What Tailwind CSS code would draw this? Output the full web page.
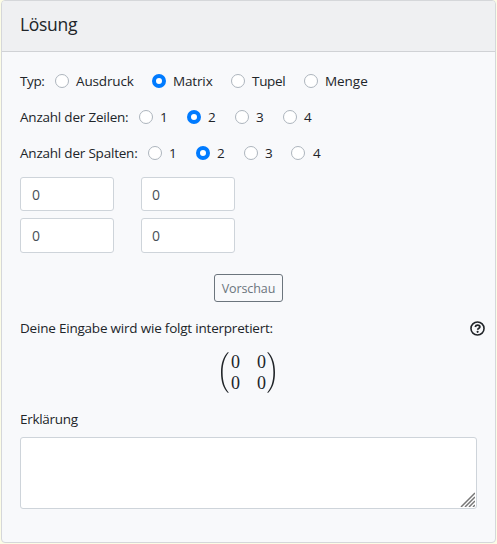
<!DOCTYPE html>
<html lang="de">
<head>
<meta charset="utf-8">
<title>Lösung</title>
<script src="https://cdn.jsdelivr.net/npm/@tailwindcss/browser@4"></script>
</head>
<body class="h-[544px] overflow-hidden bg-[#fcfce6] pl-px font-['Open_Sans','Noto_Sans',sans-serif] text-[13.5px] tracking-[-0.21px] text-[#212529]">
<section class="flex h-[543px] w-[495px] flex-col rounded-[4px] border border-[#d5d7da] bg-[#f8f9fb]">
  <h1 class="h-[51px] shrink-0 rounded-t-[3px] border-b border-[#d0d2d5] bg-[#eff0f2] pl-[18px] text-[17.5px] leading-[46px] tracking-[-0.3px]">Lösung</h1>
  <div class="flex flex-col px-[18px] pt-[11px]">
    <div class="flex h-9 items-center">
      <span class="w-[35px] tracking-[-0.4px]">Typ:</span>
      <label class="flex w-[97px] items-center gap-[7px] tracking-[-0.15px]"><i class="size-[14px] rounded-full border border-[#adb5bd] bg-white"></i>Ausdruck</label>
      <label class="flex w-[79px] items-center gap-[7px] tracking-[-0.15px]"><i class="size-[14px] rounded-full border-[4.5px] border-[#007bff] bg-white"></i>Matrix</label>
      <label class="flex w-[73px] items-center gap-[7px] tracking-[-0.3px]"><i class="size-[14px] rounded-full border border-[#adb5bd] bg-white"></i>Tupel</label>
      <label class="flex items-center gap-[7px] tracking-[-0.05px]"><i class="size-[14px] rounded-full border border-[#adb5bd] bg-white"></i>Menge</label>
    </div>
    <div class="flex h-9 items-center">
      <span class="w-[119px]">Anzahl der Zeilen:</span>
      <label class="flex w-12 items-center gap-[7px]"><i class="size-[14px] rounded-full border border-[#adb5bd] bg-white"></i>1</label>
      <label class="flex w-12 items-center gap-[7px]"><i class="size-[14px] rounded-full border-[4.5px] border-[#007bff] bg-white"></i>2</label>
      <label class="flex w-12 items-center gap-[7px]"><i class="size-[14px] rounded-full border border-[#adb5bd] bg-white"></i>3</label>
      <label class="flex items-center gap-[7px]"><i class="size-[14px] rounded-full border border-[#adb5bd] bg-white"></i>4</label>
    </div>
    <div class="flex h-9 items-center">
      <span class="w-[128px]">Anzahl der Spalten:</span>
      <label class="flex w-12 items-center gap-[7px]"><i class="size-[14px] rounded-full border border-[#adb5bd] bg-white"></i>1</label>
      <label class="flex w-12 items-center gap-[7px]"><i class="size-[14px] rounded-full border-[4.5px] border-[#007bff] bg-white"></i>2</label>
      <label class="flex w-[47px] items-center gap-[7px]"><i class="size-[14px] rounded-full border border-[#adb5bd] bg-white"></i>3</label>
      <label class="flex items-center gap-[8px]"><i class="size-[14px] rounded-full border border-[#adb5bd] bg-white"></i>4</label>
    </div>
    <div class="mt-[6px] grid grid-cols-[94px_94px] grid-rows-[34px_35px] gap-x-[27px] gap-y-[7px] text-[14px] text-[#495057]">
      <div class="flex items-center rounded-[3px] border border-[#ced4da] bg-white pl-[11px]">0</div>
      <div class="flex items-center rounded-[3px] border border-[#ced4da] bg-white pl-[10px]">0</div>
      <div class="flex items-center rounded-[3px] border border-[#ced4da] bg-white pl-[11px]">0</div>
      <div class="flex items-center rounded-[3px] border border-[#ced4da] bg-white pl-[10px]">0</div>
    </div>
    <button class="mt-[21px] ml-[194px] h-7 w-[69px] rounded-[3px] border border-[#6c757d] pt-[2px] text-[12.5px] tracking-[-0.1px] text-[#6c757d]">Vorschau</button>
    <div class="mt-4 flex h-5 items-center justify-between">
      <span>Deine Eingabe wird wie folgt interpretiert:</span>
      <svg class="mr-[-8px] size-[15px]" viewBox="0 0 14 14" fill="none" stroke="#212529"><circle cx="7" cy="7" r="6.1" stroke-width="1.5"/><path d="M4.900 5.500C5.200 4.400 6 3.900 7.100 3.900c1.200 0 2.100.6 2.100 1.600C9.200 6.700 7.300 6.700 7.200 8.200" stroke-width="1.700"/><circle cx="7.1" cy="10.1" r="1" fill="#212529" stroke="none"/></svg>
    </div>
    <div class="mt-[13px] ml-[199px] flex h-[43px] w-[58px] items-center justify-between font-['Liberation_Serif',serif] text-[18px] tracking-normal">
      <svg class="h-[43px] w-[10px]" viewBox="0 0 10 43" fill="#212529"><path d="M9 1C4.400 5.500 2 12 2 21.500S4.400 37.500 9 42l.7-.5C6 37 3.600 31 3.600 21.500S6 6 9.700 1.500Z"/></svg>
      <div class="ml-px grid grid-cols-[9px_9px] gap-x-[17px] leading-[21px]"><span>0</span><span>0</span><span>0</span><span>0</span></div>
      <svg class="h-[43px] w-[10px]" viewBox="0 0 10 43" fill="#212529"><path d="M1 1C5.600 5.500 8 12 8 21.500S5.600 37.500 1 42l-.7-.5C4 37 6.400 31 6.400 21.500S4 6 .3 1.500Z"/></svg>
    </div>
    <span class="mt-[15px] h-5 leading-5 tracking-[-0.3px]">Erklärung</span>
    <div class="mt-2 flex h-[72px] w-[457px] items-end justify-end rounded-[3px] border border-[#ced4da] bg-white">
      <svg class="mr-px mb-px size-[15px]" viewBox="0 0 15 15" stroke="#777" stroke-width="1.5"><path d="M1 15 15 1M5 15 15 5M9 15l6-6M13 15l2-2"/></svg>
    </div>
  </div>
</section>
</body>
</html>
